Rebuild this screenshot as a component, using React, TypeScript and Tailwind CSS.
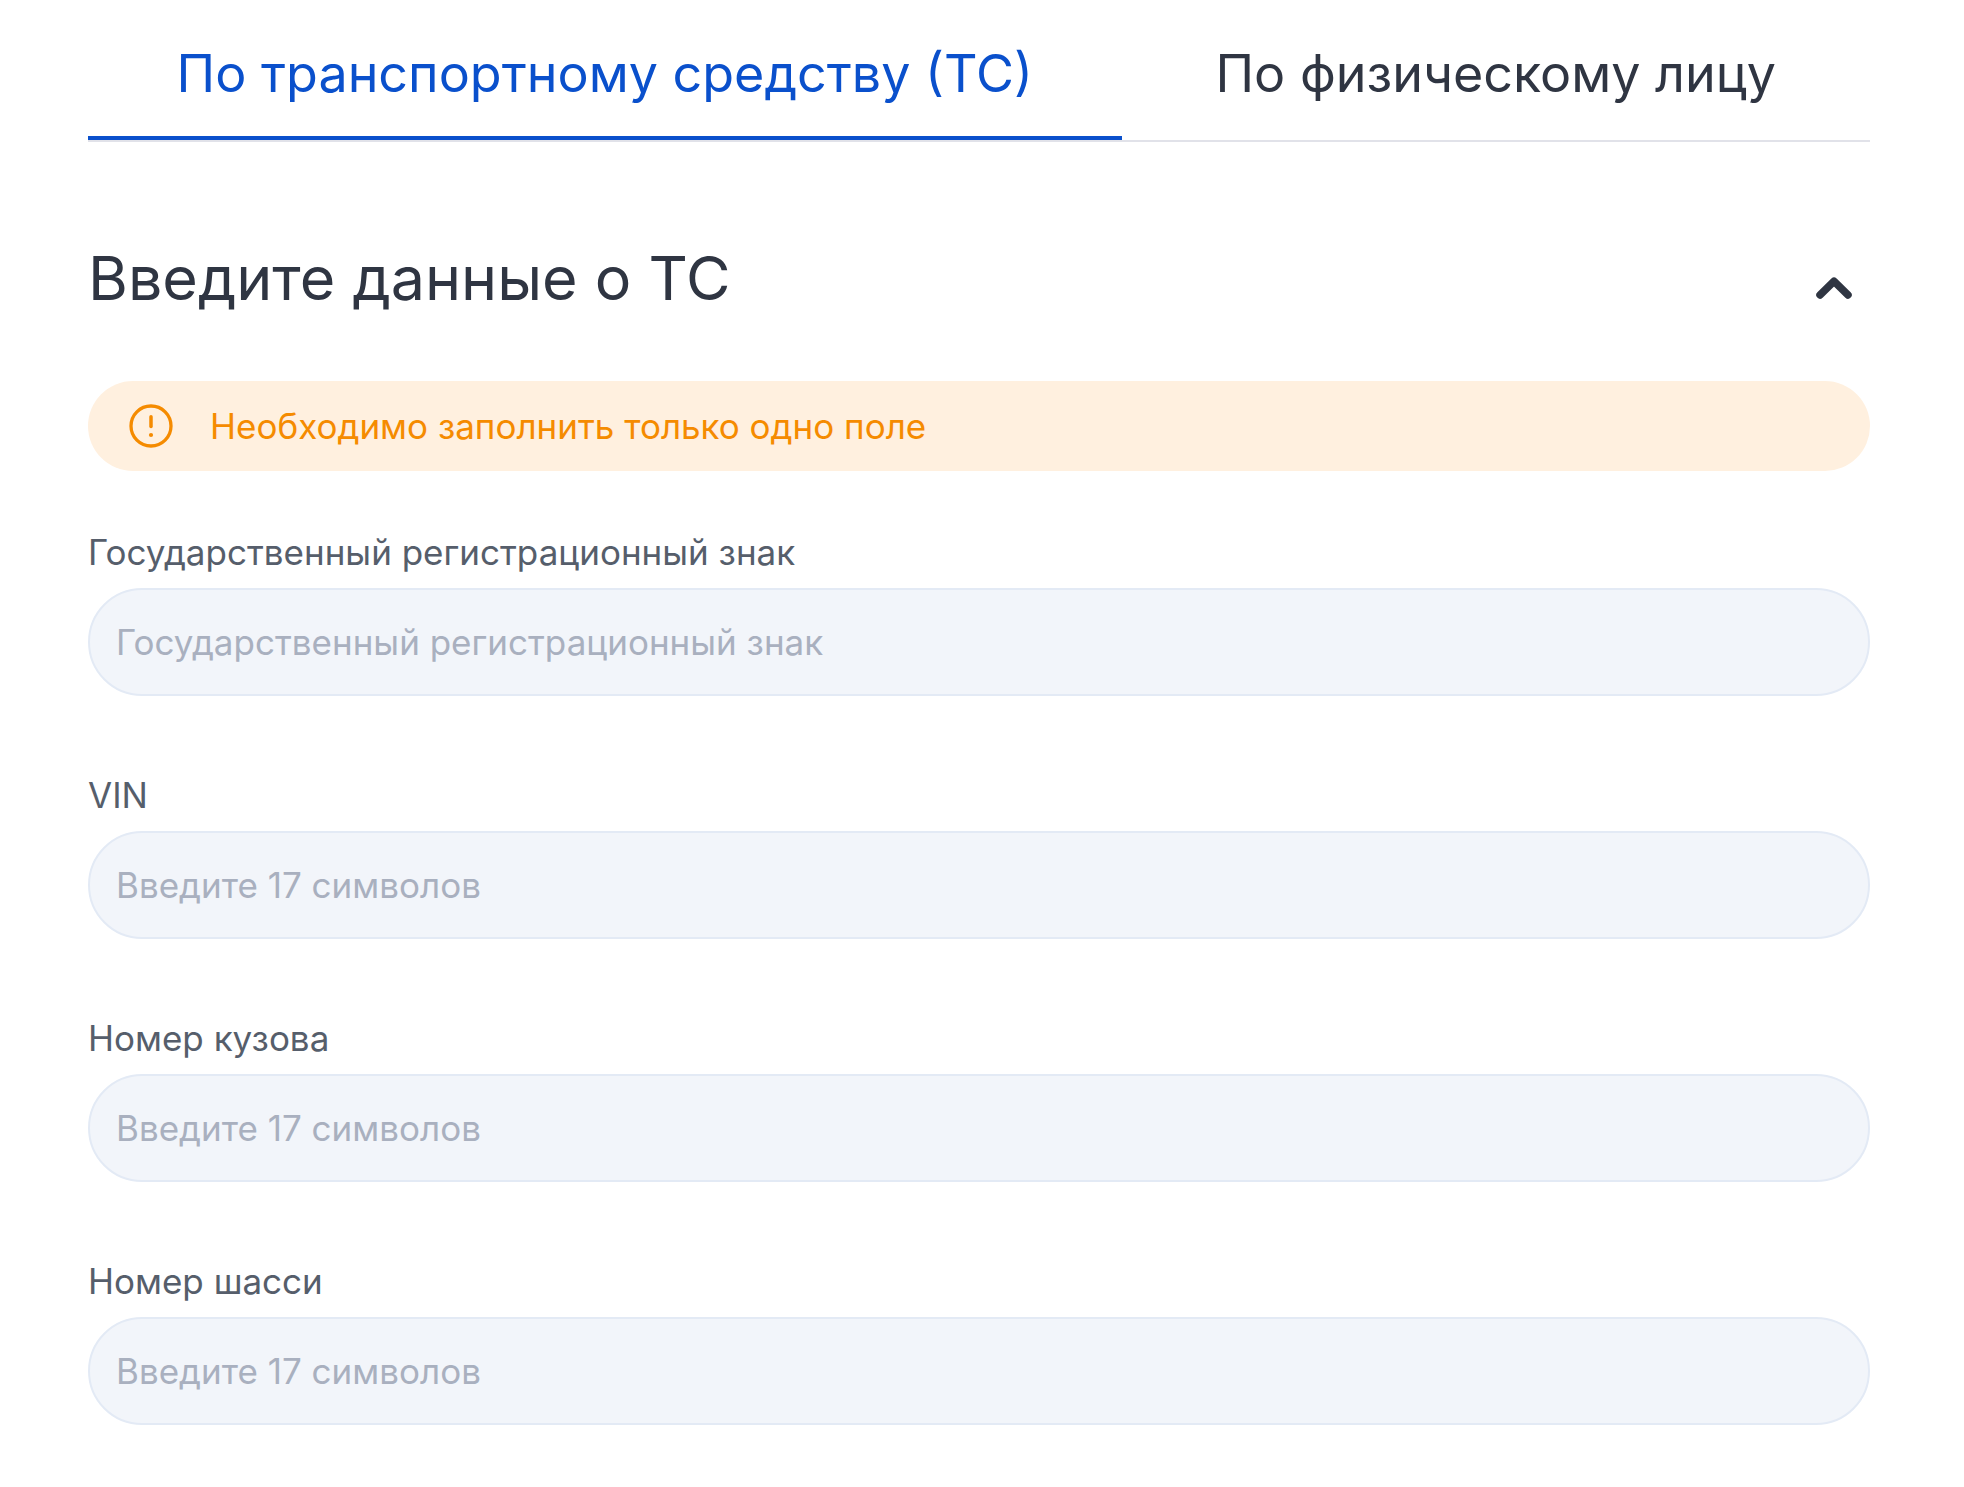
import React, { useState } from 'react';

const tabs = [
  { id: 'vehicle', label: 'По транспортному средству (ТС)' },
  { id: 'person', label: 'По физическому лицу' },
];

const fields = [
  { id: 'plate', label: 'Государственный регистрационный знак', placeholder: 'Государственный регистрационный знак' },
  { id: 'vin', label: 'VIN', placeholder: 'Введите 17 символов' },
  { id: 'body', label: 'Номер кузова', placeholder: 'Введите 17 символов' },
  { id: 'chassis', label: 'Номер шасси', placeholder: 'Введите 17 символов' },
];

const App: React.FC = () => {
  const [activeTab, setActiveTab] = useState('vehicle');
  const [open, setOpen] = useState(true);
  const [values, setValues] = useState<Record<string, string>>({});

  const handleInputChange = (e: React.ChangeEvent<HTMLInputElement>) => {
    const { name, value } = e.target;
    setValues(prev => ({ ...prev, [name]: value }));
  };

  return (
    <main className="min-h-screen bg-white pl-[88px] pr-[94px] pt-9 pb-12 font-[Inter,'Liberation_Sans',sans-serif] text-[#2f3542]">
      <div role="tablist" className="grid grid-cols-[58fr_42fr] border-b-2 border-[#e1e2e9]">
        {tabs.map(tab => (
          <button
            key={tab.id}
            type="button"
            role="tab"
            aria-selected={activeTab === tab.id}
            onClick={() => setActiveTab(tab.id)}
            className={`border-b-4 pb-6 text-[52px] leading-[76px] whitespace-nowrap cursor-pointer ${
              activeTab === tab.id ? 'border-[#0a50cc] text-[#0a50cc]' : 'border-transparent'
            }`}
          >
            {tab.label}
          </button>
        ))}
      </div>

      <div className="mt-[94px] flex items-start justify-between">
        <h1 className="text-[61px] leading-[84px]">Введите данные о ТС</h1>
        <button
          type="button"
          aria-label="Свернуть"
          aria-expanded={open}
          onClick={() => setOpen(!open)}
          className="mt-4 p-3 cursor-pointer"
        >
          <svg
            viewBox="0 0 48 48"
            className={open ? 'size-12' : 'size-12 rotate-180'}
            fill="none"
            stroke="currentColor"
            strokeWidth="7.5"
            strokeLinecap="round"
            strokeLinejoin="round"
          >
            <path d="M10 31 24 17.3 38 31" />
          </svg>
        </button>
      </div>

      {open && (
        <form onSubmit={e => e.preventDefault()}>
          <div className="mt-[57px] flex h-[90px] items-center gap-9 rounded-full bg-[#fff0df] px-10 text-[#f58b00]">
            <svg viewBox="0 0 46 46" className="size-[46px] shrink-0" fill="none" stroke="currentColor" strokeLinecap="round">
              <circle cx="23" cy="23" r="20" strokeWidth="3.3" />
              <path d="M23 13.8v9.7" strokeWidth="3.5" />
              <circle cx="23" cy="32" r="2.1" fill="currentColor" stroke="none" />
            </svg>
            <p className="text-[35px] leading-[48px]">Необходимо заполнить только одно поле</p>
          </div>

          <div className="mt-[57px] flex flex-col gap-[75px]">
            {fields.map(field => (
              <div key={field.id} className="flex flex-col gap-3">
                <label htmlFor={field.id} className="text-[35px] leading-[48px] text-[#565e6b]">
                  {field.label}
                </label>
                <input
                  id={field.id}
                  name={field.id}
                  type="text"
                  value={values[field.id] || ''}
                  onChange={handleInputChange}
                  placeholder={field.placeholder}
                  className="h-[108px] w-full rounded-full border-2 border-[#e3eaf5] bg-[#f2f5fa] px-[26px] text-[35px] placeholder:text-[#a9b0bf] focus:border-[#0a50cc] focus:outline-none"
                />
              </div>
            ))}
          </div>
        </form>
      )}
    </main>
  );
};

export default App;
